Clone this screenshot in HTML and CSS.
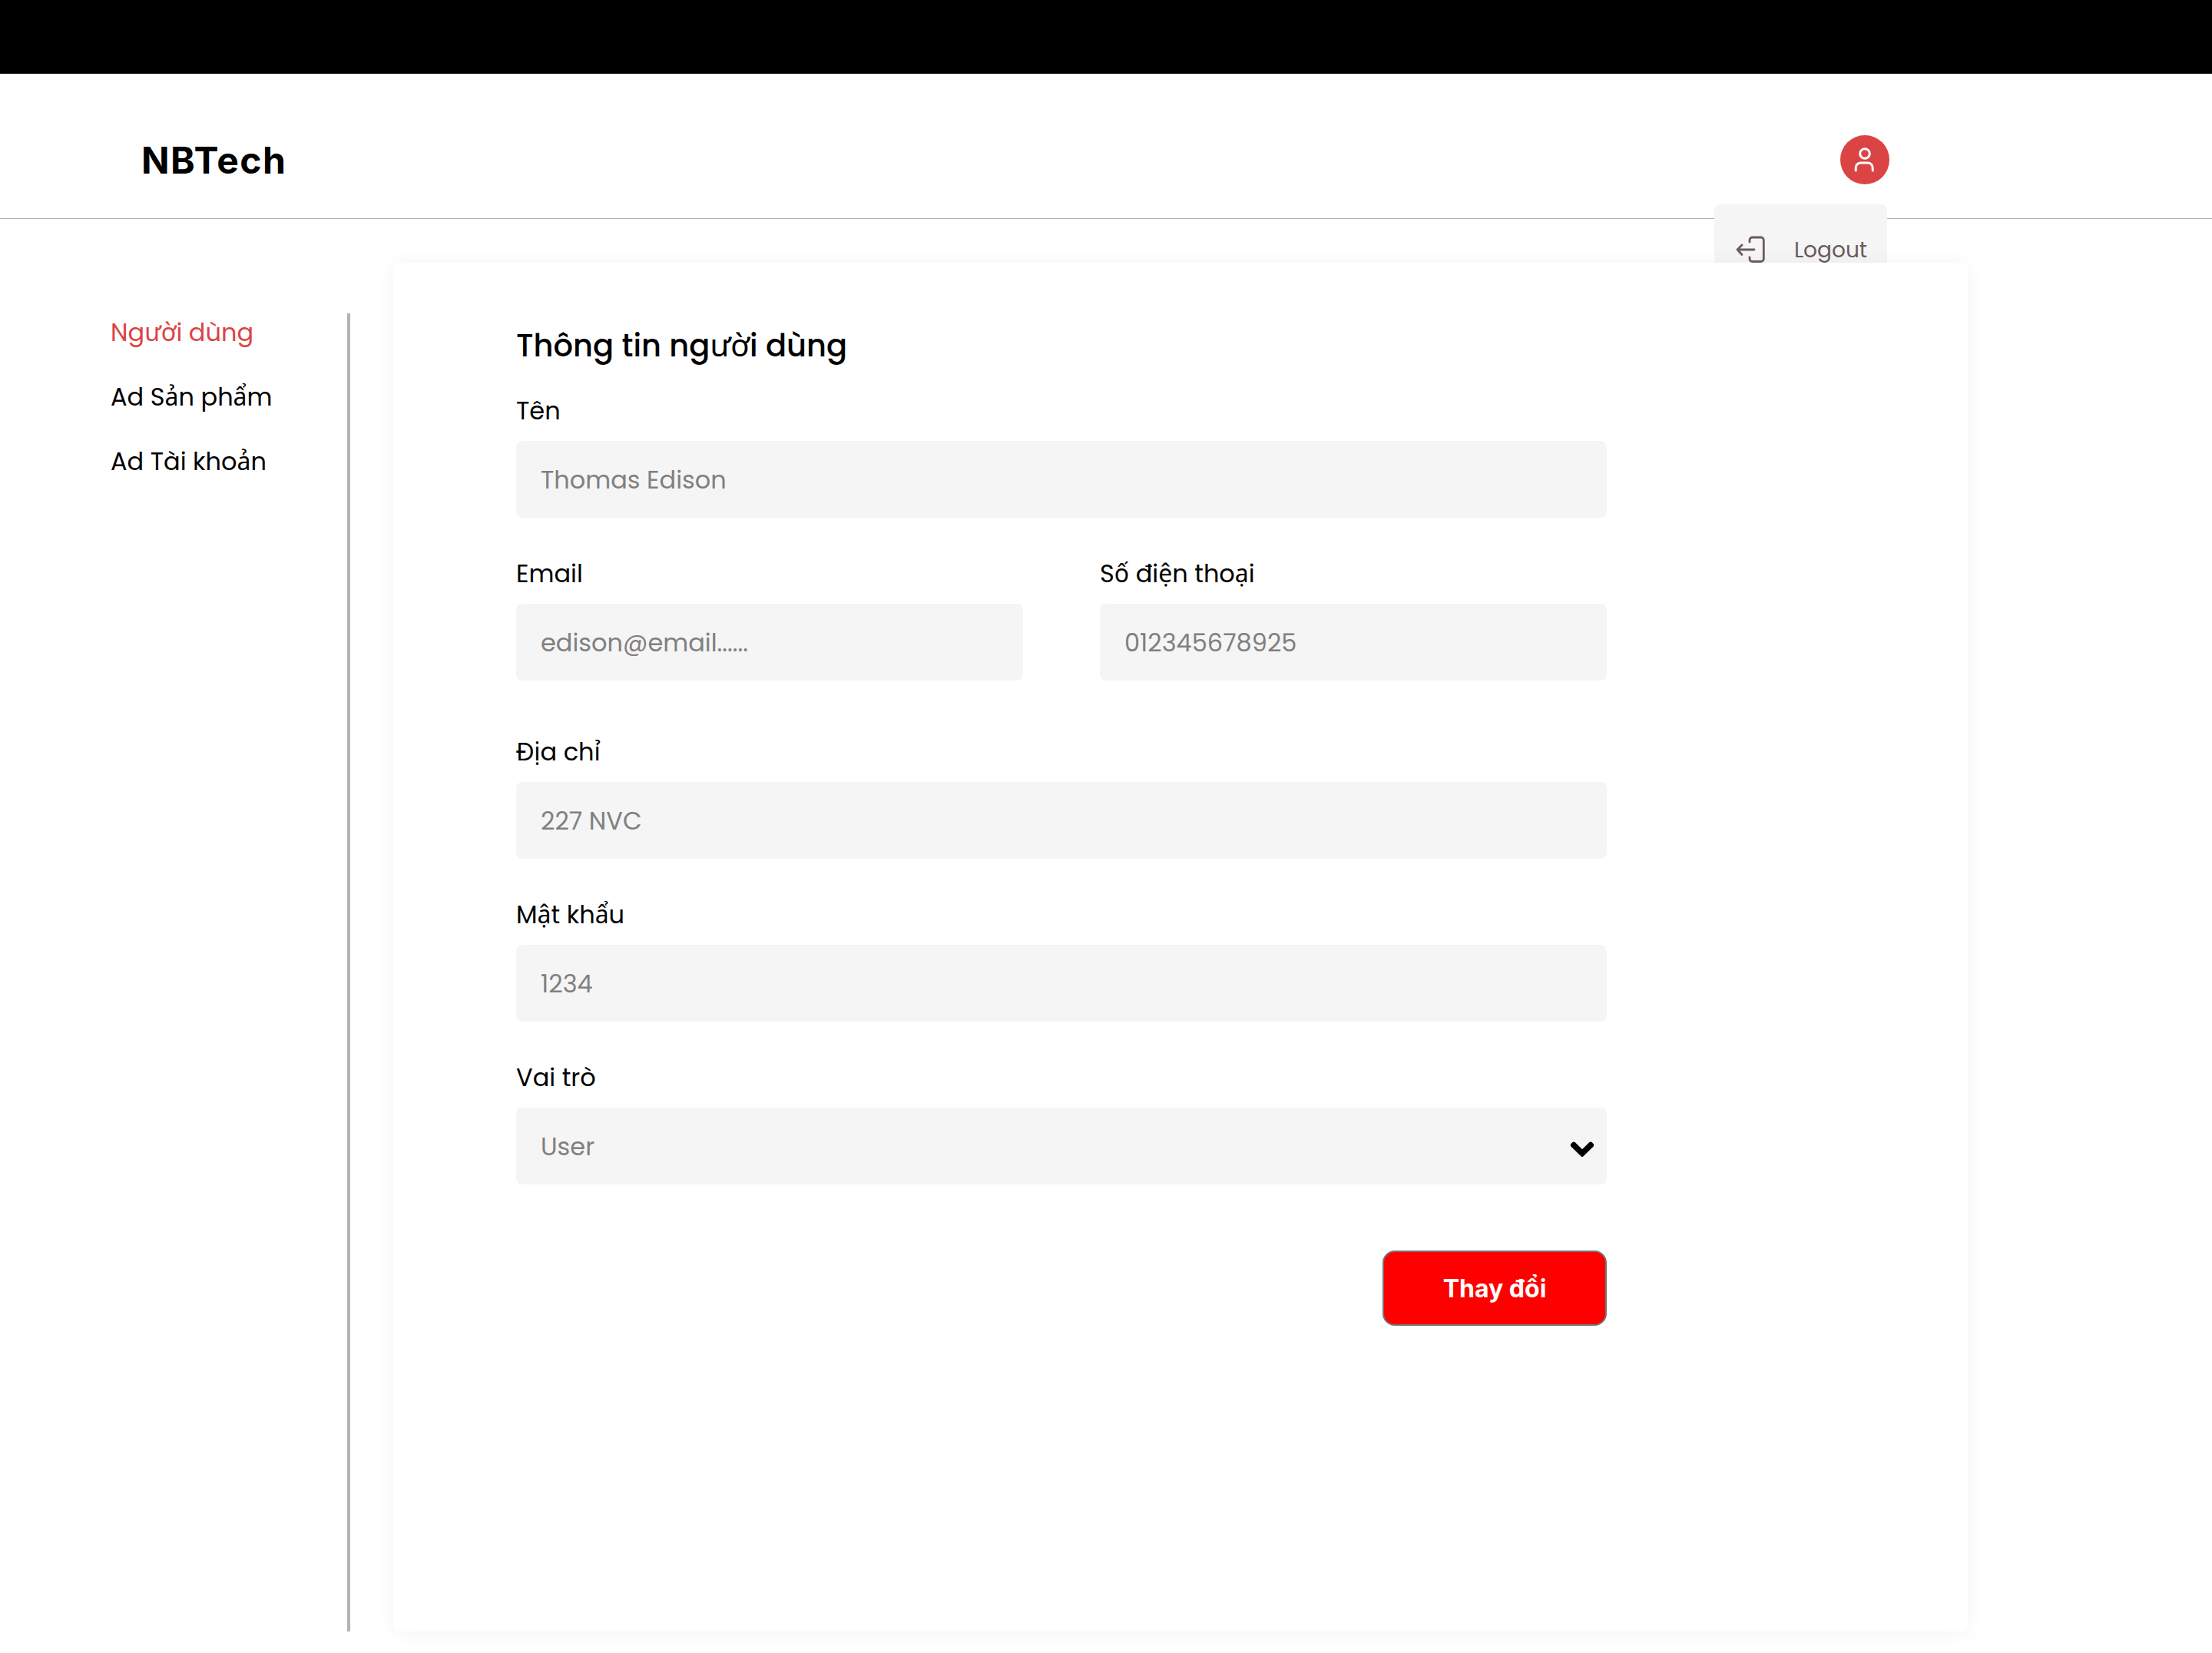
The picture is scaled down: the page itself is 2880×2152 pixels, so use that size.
FILE: index.html
```html
<!DOCTYPE html>
<html lang="vi">
<head>
  <meta charset="utf-8">
  <meta name="viewport" content="width=device-width, initial-scale=1">
  <title>NBTech</title>
  <link rel="stylesheet" href="styles.css">
</head>
<body>
  <div class="topbar"></div>
  <header class="header">
    <a class="logo" href="#">NBTech</a>
    <div class="account">
      <button class="avatar" type="button" aria-label="Tài khoản">
        <svg viewBox="0 0 64 64" fill="none" stroke="currentColor" stroke-width="3" stroke-linecap="round" stroke-linejoin="round" aria-hidden="true">
          <circle cx="32" cy="24" r="6.3"/>
          <path d="M20.200 46v-3.500a6.500 6.500 0 0 1 6.500-6.500h9a6.500 6.500 0 0 1 6.500 6.500V46"/>
        </svg>
      </button>
      <div class="menu">
        <a class="menu-item" href="#">
          <svg viewBox="0 0 38 38" fill="none" stroke="currentColor" stroke-width="2.800" stroke-linecap="round" stroke-linejoin="round" aria-hidden="true">
            <path d="M18 8V5.500A3.500 3.500 0 0 1 21.500 2h11A3.700 3.700 0 0 1 36.300 5.500v24.500a3.700 3.700 0 0 1-3.800 3.500h-11A3.500 3.500 0 0 1 18 30v-2"/>
            <path d="M24 18H2M8 12l-6 6 6 6.500"/>
          </svg>
          <span>Logout</span>
        </a>
      </div>
    </div>
  </header>

  <main class="page">
    <nav class="sidebar">
      <a class="nav-link active" href="#">Người dùng</a>
      <a class="nav-link" href="#">Ad Sản phẩm</a>
      <a class="nav-link" href="#">Ad Tài khoản</a>
    </nav>

    <section class="panel">
      <form class="form">
        <h1 class="title">Thông tin ng<span class="light">ườ</span>i dùng</h1>
        <div class="group">
          <div class="field">
            <label for="name">Tên</label>
            <input id="name" type="text" placeholder="Thomas Edison">
          </div>
          <div class="row">
            <div class="field">
              <label for="email">Email</label>
              <input id="email" type="email" placeholder="edison@email......">
            </div>
            <div class="field">
              <label for="phone">Số điện thoại</label>
              <input id="phone" type="tel" placeholder="012345678925">
            </div>
          </div>
        </div>
        <div class="group">
          <div class="field">
            <label for="address">Địa chỉ</label>
            <input id="address" type="text" placeholder="227 NVC">
          </div>
          <div class="field">
            <label for="password">Mật khẩu</label>
            <input id="password" type="text" placeholder="1234">
          </div>
          <div class="field">
            <label for="role">Vai trò</label>
            <div class="select">
              <select id="role">
                <option>User</option>
                <option>Admin</option>
              </select>
              <svg class="chevron" viewBox="0 0 32 20" aria-hidden="true">
                <path d="M1.300 3.200 3.400 1.100a3 3 0 0 1 3.200 0L16 10.200l9.400-9.100a3 3 0 0 1 3.200 0l2.100 2.100a3 3 0 0 1 0 3.200L17.600 19.300a2.300 2.300 0 0 1-3.200 0L1.300 6.400a3 3 0 0 1 0-3.200z"/>
              </svg>
            </div>
          </div>
        </div>
        <button class="submit" type="submit">Thay đổi</button>
      </form>
    </section>
  </main>
</body>
</html>
```

FILE: styles.css
```css
*,
*::before,
*::after {
  box-sizing: border-box;
}

body {
  display: flex;
  flex-direction: column;
  min-height: 100vh;
  margin: 0;
  background: #fff;
  color: #000;
  font-family: Poppins, "Noto Sans", sans-serif;
  font-size: 32px;
  line-height: 48px;
}

a {
  color: inherit;
  text-decoration: none;
}

.topbar {
  height: 96px;
  background: #000;
}

/* Header */

.header {
  display: flex;
  align-items: center;
  justify-content: space-between;
  padding: 80px 420px 44px 184px;
  border-bottom: 1px solid #b3b3b3;
}

.logo {
  padding-top: 2px;
  font-family: Inter, sans-serif;
  font-size: 48px;
  font-weight: 700;
  letter-spacing: 0.03em;
}

.account {
  position: relative;
}

.avatar {
  display: block;
  width: 64px;
  height: 64px;
  padding: 0;
  border: 0;
  border-radius: 50%;
  background: #db4444;
  color: #fff;
}

.avatar svg {
  display: block;
}

.menu {
  position: absolute;
  top: 90px;
  right: 3px;
  padding: 36px 26px 36px 28px;
  border-radius: 8px;
  background: #f5f5f5;
}

.menu-item {
  display: flex;
  align-items: center;
  gap: 38px;
  color: #6c5b5d;
  font-size: 28px;
}

.menu-item svg {
  flex: none;
  width: 38px;
  height: 38px;
}

/* Page */

.page {
  display: flex;
  flex: 1;
  gap: 56px;
  padding: 57px 318px 28px 144px;
}

.sidebar {
  display: flex;
  flex: none;
  flex-direction: column;
  gap: 36px;
  width: 312px;
  margin-top: 66px;
  padding-top: 1px;
  border-right: 4px solid #b3b3b3;
}

.active {
  color: #db4444;
}

.panel {
  position: relative;
  flex: 1;
  padding: 80px 160px;
  border-radius: 8px;
  background: #fff;
  box-shadow: 0 2px 26px rgba(0, 0, 0, 0.05);
}

/* Form */

.form {
  display: flex;
  flex-direction: column;
  max-width: 1420px;
}

.title {
  margin: 0 0 33px;
  font-size: 40px;
  font-weight: 500;
  line-height: 56px;
}

.light {
  font-weight: 400;
}

.group {
  display: flex;
  flex-direction: column;
  gap: 49px;
}

.group + .group {
  margin-top: 69px;
}

.row {
  display: flex;
  gap: 100px;
}

.field {
  display: flex;
  flex: 1;
  flex-direction: column;
  gap: 15px;
}

.field input,
.field select {
  width: 100%;
  height: 100px;
  padding: 2px 32px 0;
  border: 0;
  border-radius: 8px;
  background: #f5f5f5;
  color: #808080;
  font: inherit;
}

.field input::placeholder {
  color: #808080;
}

.select {
  position: relative;
}

.field select {
  display: block;
  appearance: none;
}

.chevron {
  position: absolute;
  top: 44px;
  right: 16px;
  width: 32px;
  height: 20px;
  pointer-events: none;
}

.submit {
  align-self: flex-end;
  width: 292px;
  height: 98px;
  margin-top: 86px;
  border: 2px solid #757575;
  border-radius: 16px;
  background: #f00;
  color: #fff;
  font-family: Inter, sans-serif;
  font-size: 32px;
  font-weight: 700;
}
```
